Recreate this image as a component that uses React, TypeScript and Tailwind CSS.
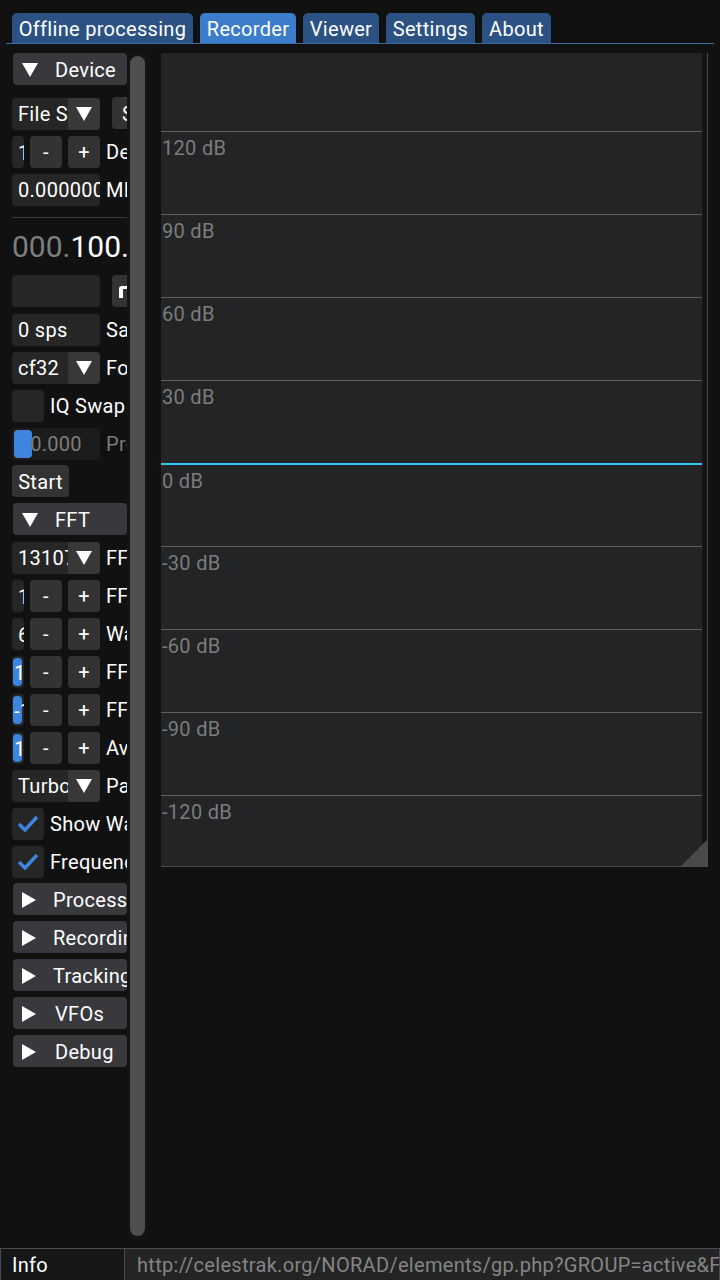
import React from "react";

const tabs = [
  { name: "Offline processing", w: "w-[181px]", active: false },
  { name: "Recorder", w: "w-[96px]", active: true },
  { name: "Viewer", w: "w-[76px]", active: false },
  { name: "Settings", w: "w-[89px]", active: false },
  { name: "About", w: "w-[69px]", active: false },
];

const grid = [
  { label: "120 dB", line: "bg-[#5e5e60] h-px" },
  { label: "90 dB", line: "bg-[#5e5e60] h-px" },
  { label: "60 dB", line: "bg-[#5e5e60] h-px" },
  { label: "30 dB", line: "bg-[#5e5e60] h-px" },
  { label: "0 dB", line: "bg-[#33c4f0] h-[2px]" },
  { label: "-30 dB", line: "bg-[#5e5e60] h-px" },
  { label: "-60 dB", line: "bg-[#5e5e60] h-px" },
  { label: "-90 dB", line: "bg-[#5e5e60] h-px" },
  { label: "-120 dB", line: "bg-[#5e5e60] h-px" },
];

function Down() {
  return (
    <svg width="16" height="14" viewBox="0 0 16 14" className="shrink-0">
      <polygon points="0,0 16,0 8,14" fill="#ffffff" />
    </svg>
  );
}

function Right() {
  return (
    <svg width="14" height="16" viewBox="0 0 14 16" className="shrink-0">
      <polygon points="0,0 14,8 0,16" fill="#ffffff" />
    </svg>
  );
}

function Header({ label, open }: { label: string; open?: boolean }) {
  return (
    <div className="h-[32px] w-[114px] ml-px rounded-[4px] bg-[#39393d] flex items-center pl-[9px] pt-px shrink-0">
      <div className="w-[16px] flex justify-start">{open ? <Down /> : <Right />}</div>
      <span className="ml-[17px] whitespace-nowrap">{label}</span>
    </div>
  );
}

function Label({ children, gray }: { children: React.ReactNode; gray?: boolean }) {
  return (
    <span className={`ml-[6px] whitespace-nowrap ${gray ? "text-[#7c7c7c]" : "text-white"}`}>{children}</span>
  );
}

function Combo({ value, label }: { value: string; label?: string }) {
  return (
    <div className="flex items-center h-[32px] shrink-0 pt-px">
      <div className="flex h-[32px] w-[88px] rounded-[4px] overflow-hidden shrink-0">
        <div className="w-[56px] bg-[#262626] pl-[6px] pt-px flex items-center overflow-hidden whitespace-nowrap">{value}</div>
        <div className="w-[32px] bg-[#383838] flex items-center justify-center">
          <Down />
        </div>
      </div>
      {label && <Label>{label}</Label>}
    </div>
  );
}

function Btn({ children, className = "" }: { children: React.ReactNode; className?: string }) {
  return (
    <div className={`h-[32px] rounded-[4px] bg-[#333333] flex items-center pt-px shrink-0 ${className}`}>
      {children}
    </div>
  );
}

function Stepper({ value, label, grab }: { value: string; label: string; grab?: boolean }) {
  return (
    <div className="flex items-center h-[32px] shrink-0 pt-px">
      <div className="relative w-[12px] h-[32px] rounded-[4px] bg-[#262626] overflow-hidden shrink-0">
        {grab && <div className="absolute left-px top-[2px] w-[9px] h-[28px] rounded-[4px] bg-[#3d85e0]" />}
        <span className={`absolute top-[7px] whitespace-nowrap ${grab ? "left-[2px]" : "left-[6px]"}`}>{value}</span>
      </div>
      <Btn className="w-[32px] ml-[6px] justify-center">-</Btn>
      <Btn className="w-[32px] ml-[6px] justify-center">+</Btn>
      <Label>{label}</Label>
    </div>
  );
}

function Input({ value, label, gray }: { value: string; label?: string; gray?: boolean }) {
  return (
    <div className="flex items-center h-[32px] shrink-0 pt-px">
      <div className="w-[88px] h-[32px] rounded-[4px] bg-[#262626] pl-[6px] pt-px flex items-center overflow-hidden whitespace-nowrap shrink-0">
        {value}
      </div>
      {label && <Label gray={gray}>{label}</Label>}
    </div>
  );
}

function Check({ checked, label }: { checked?: boolean; label: string }) {
  return (
    <div className="flex items-center h-[32px] shrink-0 pt-px">
      <div className="w-[32px] h-[32px] rounded-[4px] bg-[#262626] flex items-center justify-center shrink-0">
        {checked && (
          <svg width="22" height="18" viewBox="0 0 22 18">
            <polyline points="2,9 8,15 20,2" fill="none" stroke="#3d85e0" strokeWidth="3.5" strokeLinejoin="miter" />
          </svg>
        )}
      </div>
      <Label>{label}</Label>
    </div>
  );
}

export default function App() {
  return (
    <div
      className="w-[720px] h-[1280px] bg-[#111111] text-white text-[20px] tracking-[0.3px] leading-none flex flex-col overflow-hidden"
      style={{ fontFamily: "Roboto, 'Noto Sans', sans-serif" }}
    >
      {/* Tabs */}
      <div className="h-[44px] shrink-0 flex flex-col pt-[13px]">
        <div className="flex h-[30px] pl-[12px] gap-[7px]">
          {tabs.map((t) => (
            <div
              key={t.name}
              className={`${t.w} h-[30px] rounded-t-[5px] flex items-center justify-center pt-px whitespace-nowrap ${
                t.active ? "bg-[#3b7ccb]" : "bg-[#2b5283]"
              }`}
            >
              {t.name}
            </div>
          ))}
        </div>
        <div className="mx-[6px] h-px bg-[#3a6aa6]" />
      </div>

      {/* Main */}
      <div className="flex-1 flex pt-[9px] min-h-0">
        {/* Left panel */}
        <div className="w-[115px] ml-[12px] overflow-hidden flex flex-col shrink-0">
          <Header label="Device" open />
          <div className="flex items-center mt-[12px] shrink-0">
            <Combo value="File Source" />
            <Btn className="w-[40px] ml-[12px] justify-start pl-[10px]">Start</Btn>
          </div>
          <div className="mt-[6px] flex flex-col gap-[6px]">
            <Stepper value="1" label="Decimation" />
            <Input value="0.000000" label="MHz" />
          </div>
          <div className="mt-[12px] h-px bg-[#3a3a3a] shrink-0" />
          <div className="h-[57px] flex items-center text-[30px] tracking-normal pt-px shrink-0 whitespace-nowrap">
            <span className="text-[#7f7f7f]">000.</span>
            <span>100.</span>
            <span>000</span>
          </div>
          <div className="flex flex-col gap-[6px]">
            <div className="flex items-center h-[32px] shrink-0">
              <div className="w-[88px] h-[32px] rounded-[4px] bg-[#262626] shrink-0" />
              <Btn className="w-[40px] ml-[12px] justify-start pl-[6px]">
                <svg width="14" height="14" viewBox="0 0 14 14">
                  <path d="M1 4 a3 3 0 0 1 3 -3 h9 v3 h-8 v9 h-4 z" fill="#ffffff" />
                </svg>
              </Btn>
            </div>
            <Input value="0 sps" label="Samplerate" />
            <Combo value="cf32" label="Format" />
            <Check label="IQ Swap" />
            <div className="flex items-center h-[32px] shrink-0 pt-px">
              <div className="relative w-[88px] h-[32px] rounded-[4px] bg-[#1c1c1c] shrink-0 flex items-center justify-center">
                <div className="absolute left-[2px] top-[2px] w-[18px] h-[28px] rounded-[4px] bg-[#3d85e0]" />
                <span className="relative text-[#7c7c7c]">0.000</span>
              </div>
              <Label gray>Progress</Label>
            </div>
            <Btn className="w-[57px] justify-center">Start</Btn>
            <Header label="FFT" open />
            <Combo value="131072" label="FFT Size" />
            <Stepper value="1" label="FFT Rate" />
            <Stepper value="60" label="Waterfall Rate" />
            <Stepper value="1" label="FFT Max" grab />
            <Stepper value="-1" label="FFT Min" grab />
            <Stepper value="1" label="Avg Num" grab />
            <Combo value="Turbo" label="Palette" />
            <Check checked label="Show Waterfall" />
            <Check checked label="Frequency Scale" />
            <Header label="Processing" />
            <Header label="Recording" />
            <Header label="Tracking" />
            <Header label="VFOs" />
            <Header label="Debug" />
          </div>
        </div>

        {/* Scrollbar */}
        <div className="w-[21px] h-[1186px] bg-[#141414] shrink-0 pt-[3px] px-[3px]">
          <div className="w-[15px] h-[1180px] rounded-full bg-[#4f4f4f]" />
        </div>

        {/* Plot window */}
        <div className="ml-[13px] w-[547px] h-[814px] shrink-0 relative bg-[#141414] border-r border-b border-[#4a4a4a]">
          <div className="w-[541px] h-[813px] bg-[#232426] flex flex-col pt-[78px]">
            {grid.map((g) => (
              <div key={g.label} className="h-[83px] shrink-0 flex flex-col">
                <div className={g.line} />
                <span className="mt-[6px] ml-px text-[#7c7c7c] text-[20px]">{g.label}</span>
              </div>
            ))}
          </div>
          <svg width="26" height="26" viewBox="0 0 26 26" className="absolute right-0 bottom-0">
            <polygon points="26,0 26,26 0,26" fill="#4a4a4c" />
          </svg>
        </div>
      </div>

      {/* Footer */}
      <div className="h-[32px] shrink-0 flex border-t border-[#4a4a58]">
        <div className="w-[125px] h-full bg-[#161616] border-l border-r border-[#4a4a58] flex items-center pt-px pl-[11px]">Info</div>
        <div className="flex-1 h-full bg-[#242424] border-r border-[#4a4a58] flex items-center pt-px pl-[12px] overflow-hidden whitespace-nowrap text-[#858585]">
          http://celestrak.org/NORAD/elements/gp.php?GROUP=active&FORMAT=tle
        </div>
      </div>
    </div>
  );
}
